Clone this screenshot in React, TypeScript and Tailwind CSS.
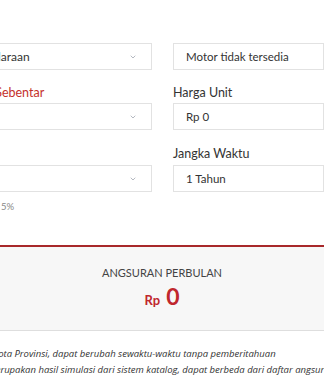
import { ChevronDown } from 'lucide-react'

const sans = { fontFamily: 'Lato, "Open Sans", "Liberation Sans", sans-serif' }
const note = { fontFamily: '"Open Sans", "Liberation Sans", sans-serif' }

function Chevron() {
  return <ChevronDown className="w-[8px] h-[8px] text-gray-500" strokeWidth={1.5} />
}

function App() {
  return (
    <div className="w-[324px] h-[389px] overflow-hidden bg-white text-[#333]" style={sans}>
      <div className="-ml-[66px] w-[500px] pt-[43px]">
        <div className="grid grid-cols-[218px_151px] gap-x-[21px]">
          {/* baris 1 */}
          <div className="h-[27px] border border-[#e2e2e2] flex items-center justify-between pl-[13px] pr-[14px] text-[12px]">
            <span>Pilih Kendaraan</span>
            <Chevron />
          </div>
          <div className="h-[27px] border border-[#e2e2e2] flex items-center pl-[12px] text-[11.5px]">
            Motor tidak tersedia
          </div>

          {/* baris 2 */}
          <label className="mt-[15px] mb-[2px] pl-[18px] text-[12.5px] text-[#c4302b] leading-[16px]">
            Tunggu Sebentar
          </label>
          <label className="mt-[15px] mb-[2px] text-[12.5px] leading-[16px]">Harga Unit</label>
          <div className="h-[27px] border border-[#e2e2e2] flex items-center justify-end pr-[14px]">
            <Chevron />
          </div>
          <div className="h-[27px] border border-[#e2e2e2] flex items-center pl-[12px] text-[11.5px]">
            Rp 0
          </div>

          {/* baris 3 */}
          <label className="mt-[16px] mb-[3px] text-[12.5px] leading-[16px]">&nbsp;</label>
          <label className="mt-[16px] mb-[3px] text-[12.5px] leading-[16px]">Jangka Waktu</label>
          <div className="h-[27px] border border-[#e2e2e2] flex items-center justify-end pr-[14px]">
            <Chevron />
          </div>
          <div className="h-[27px] border border-[#e2e2e2] flex items-center pl-[12px] text-[11.5px]">
            1 Tahun
          </div>
          <p className="mt-[8px] text-[9.5px] leading-[14px] text-[#888]">Suku bunga flat 5%</p>
        </div>
      </div>

      <div className="mt-[31px] h-[86px] border-t-2 border-[#a8282a] border-b border-b-[#dedede] bg-[#f7f7f7] flex flex-col items-center pt-[18px]">
        <p className="text-[11px] leading-[16px] text-[#444]">ANGSURAN PERBULAN</p>
        <p className="mt-[3px] flex items-baseline gap-[6px] text-[#c0272d] font-bold">
          <span className="text-[13px]">Rp</span>
          <span className="text-[23px] leading-[24px]">0</span>
        </p>
      </div>

      <div className="mt-[15px] -ml-[55px] w-[420px] text-[9.5px] italic leading-[16px] text-[#333]" style={note}>
        <p>Harga OTR Kota Provinsi, dapat berubah sewaktu-waktu tanpa pemberitahuan</p>
        <p>Angsuran merupakan hasil simulasi dari sistem katalog, dapat berbeda dari daftar angsuran resmi</p>
      </div>
    </div>
  )
}

export default App
